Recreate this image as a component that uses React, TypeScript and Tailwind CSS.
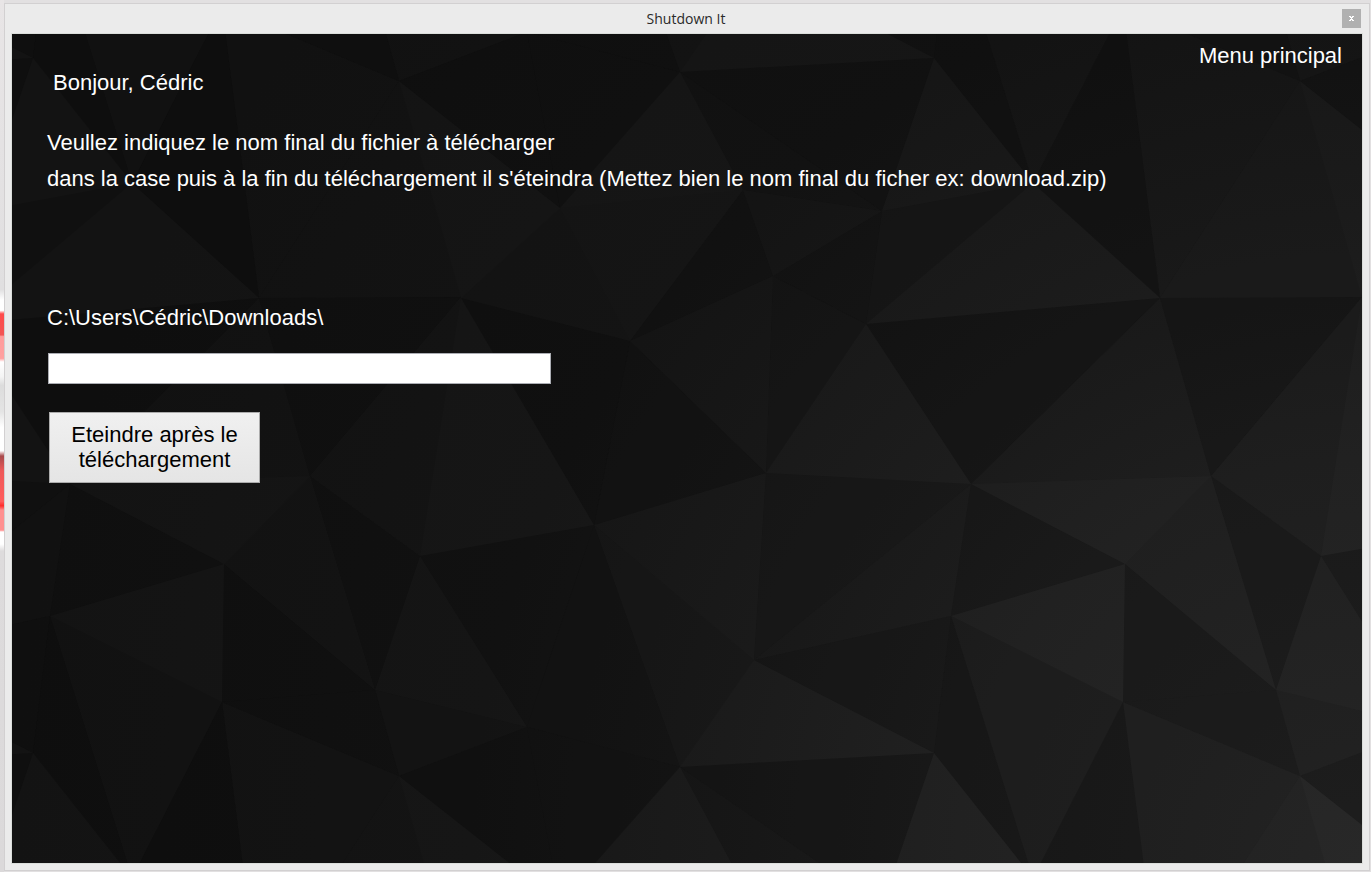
import { useState } from "react";

type Facet = [points: string, shade: number];

const TILE_W = 901;
const TILE_H = 695;

const FACETS: Facet[] = [
  ["971,484 1211,476 1125,564", 0],
  ["971,484 1160,298 1211,476", 0.12],
  ["1160,298 1362,297 1211,476", 0.28],
  ["1362,297 1321,556 1211,476", 0.1],
  ["1211,476 1321,556 1276,690", 0.26],
  ["1211,476 1125,564 1276,690", 0.05],
  ["1321,556 1276,690 1428,727", 0.04],
  ["1321,556 1495,525 1428,727", 0.24],
  ["1125,564 1276,690 1123,702", 0.26],
  ["971,484 1125,564 951,616", 0.24],
  ["1123,702 1276,690 1300,776", 0.3],
  ["1276,690 1300,776 1428,727", 0.14],
  ["951,616 1123,702 1033,878", 0.15],
  ["951,616 934,753 1033,878", 0.34],
  ["1123,702 1033,878 1160,993", 0.36],
  ["1123,702 1300,776 1160,993", 0.14],
  ["1300,776 1160,993 1362,992", 0.07],
  ["1300,776 1428,727 1461,903", 0.28],
  ["1428,727 1581,767 1461,903", 0.32],
  ["594,525 527,727 680,767", 0.26],
  ["594,525 680,767 754,660", 0.12],
  ["594,525 766,473 754,660", 0.03],
  ["766,473 971,484 754,660", 0.18],
  ["971,484 754,660 951,616", 0.12],
  ["754,660 951,616 934,753", 0.24],
  ["680,72 934,58 882,211", 0.3],
  ["680,72 743,190 882,211", 0.2],
  ["882,211 1033,183 866,324", 0.16],
  ["743,190 773,276 882,211", 0.06],
  ["773,276 882,211 866,324", 0.24],
  ["773,276 866,324 766,473", 0.2],
  ["773,276 630,341 766,473", 0.06],
  ["743,190 773,276 630,341", 0.24],
  ["560,208 743,190 630,341", 0.04],
  ["560,208 461,298 630,341", 0.06],
  ["461,298 630,341 594,525", 0.34],
  ["630,341 594,525 766,473", 0.3],
  ["866,324 1160,298 971,484", 0.32],
];

const TILES = [-1, 0, 1].flatMap((col) =>
  [-1, 0, 1].map((row) => ({ x: col * TILE_W, y: row * TILE_H })),
);

function Backdrop() {
  return (
    <svg
      className="absolute inset-0 h-full w-full"
      viewBox="12 34 1350 829"
      preserveAspectRatio="xMidYMid slice"
      aria-hidden="true"
    >
      <defs>
        <radialGradient id="glow" gradientUnits="userSpaceOnUse" cx="1362" cy="863" r="1350">
          <stop offset="0" stopColor="#282828" />
          <stop offset="0.3" stopColor="#212121" />
          <stop offset="0.48" stopColor="#1b1b1b" />
          <stop offset="0.66" stopColor="#161616" />
          <stop offset="1" stopColor="#131313" />
        </radialGradient>
        <g id="facets">
          {FACETS.map(([points, shade]) => (
            <polygon key={points} points={points} fill="#050505" fillOpacity={shade} />
          ))}
        </g>
      </defs>
      <rect x="12" y="34" width="1350" height="829" fill="url(#glow)" />
      {TILES.map(({ x, y }) => (
        <use key={`${x}:${y}`} href="#facets" x={x} y={y} />
      ))}
    </svg>
  );
}

function DesktopEdge() {
  return (
    <svg
      className="absolute top-0 left-0 h-[872px] w-1"
      viewBox="0 0 4 872"
      preserveAspectRatio="none"
      aria-hidden="true"
    >
      <defs>
        <linearGradient id="edge" gradientUnits="userSpaceOnUse" x1="0" y1="0" x2="0" y2="872">
          <stop offset="0" stopColor="#e8e5e6" />
          <stop offset="0.332" stopColor="#e0dfe0" />
          <stop offset="0.344" stopColor="#ffffff" />
          <stop offset="0.356" stopColor="#ffffff" />
          <stop offset="0.36" stopColor="#ff4a4a" />
          <stop offset="0.384" stopColor="#f25555" />
          <stop offset="0.386" stopColor="#ff9c9c" />
          <stop offset="0.411" stopColor="#ffa0a0" />
          <stop offset="0.415" stopColor="#ffffff" />
          <stop offset="0.432" stopColor="#f4f4f4" />
          <stop offset="0.442" stopColor="#dcdcdc" />
          <stop offset="0.472" stopColor="#e4e4e4" />
          <stop offset="0.49" stopColor="#ffffff" />
          <stop offset="0.517" stopColor="#ffffff" />
          <stop offset="0.523" stopColor="#a84a4c" />
          <stop offset="0.54" stopColor="#ee5a5a" />
          <stop offset="0.575" stopColor="#ff5c5c" />
          <stop offset="0.58" stopColor="#ff2c2c" />
          <stop offset="0.585" stopColor="#ff9090" />
          <stop offset="0.608" stopColor="#ff9090" />
          <stop offset="0.61" stopColor="#ffffff" />
          <stop offset="0.624" stopColor="#ffffff" />
          <stop offset="0.632" stopColor="#dddbdc" />
          <stop offset="1" stopColor="#dbd9da" />
        </linearGradient>
      </defs>
      <rect width="4" height="872" fill="url(#edge)" />
    </svg>
  );
}

export default function App() {
  const [fileName, setFileName] = useState("");

  return (
    <div className="relative flex min-h-screen bg-[#e2e0e1] pt-[3px] pr-px pb-px pl-1 font-['Liberation_Sans',Arial,sans-serif]">
      <DesktopEdge />
      <div className="flex flex-1 flex-col border border-[#d2d0d1] bg-[#ebebeb] px-[6px] pb-[6px]">
        <header className="grid h-[29px] grid-cols-[1fr_auto_1fr] items-center pr-[2px]">
          <h1 className="col-start-2 font-['Open_Sans','Noto_Sans',sans-serif] text-sm text-[#2a2a2a]">
            Shutdown It
          </h1>
          <button
            type="button"
            aria-label="Fermer"
            className="flex h-[19px] w-[19px] items-center justify-center justify-self-end bg-[#b0b0b0]"
          >
            <svg width="5" height="5" viewBox="0 0 5 5" shapeRendering="crispEdges" aria-hidden="true">
              <path
                d="M0 0h2v1h1v-1h2v1h-1v1h-1v1h1v1h1v1h-2v-1h-1v1h-2v-1h1v-1h1v-1h-1v-1h-1z"
                fill="#fff"
              />
            </svg>
          </button>
        </header>

        <main className="relative flex flex-1 flex-col border border-[#dbdedb] bg-[#131313]">
          <Backdrop />
          <div className="relative flex flex-1 flex-col items-start pr-5 pl-[35px] text-[22px] leading-[25px] text-white">
            <a href="#menu" className="mt-[9px] self-end">
              Menu principal
            </a>
            <p className="mt-[2px] pl-[6px]">Bonjour, Cédric</p>
            <p className="mt-[35px]">Veullez indiquez le nom final du fichier à télécharger</p>
            <p className="mt-[11px]">
              dans la case puis à la fin du téléchargement il s'éteindra (Mettez bien le nom final du
              ficher ex: download.zip)
            </p>
            <label htmlFor="file-name" className="mt-[114px]">
              C:\Users\Cédric\Downloads\
            </label>
            <input
              id="file-name"
              type="text"
              value={fileName}
              onChange={(event) => setFileName(event.target.value)}
              className="mt-[23px] ml-px h-[31px] w-[503px] max-w-full border border-[#abadb3] bg-white px-1 text-black outline-none"
            />
            <button
              type="button"
              className="mt-7 ml-[2px] h-[71px] w-[211px] border border-[#acacac] bg-linear-to-b from-[#f0f0f0] to-[#e5e5e5] pb-[2px] text-center text-black"
            >
              Eteindre après le téléchargement
            </button>
          </div>
        </main>
      </div>
    </div>
  );
}
